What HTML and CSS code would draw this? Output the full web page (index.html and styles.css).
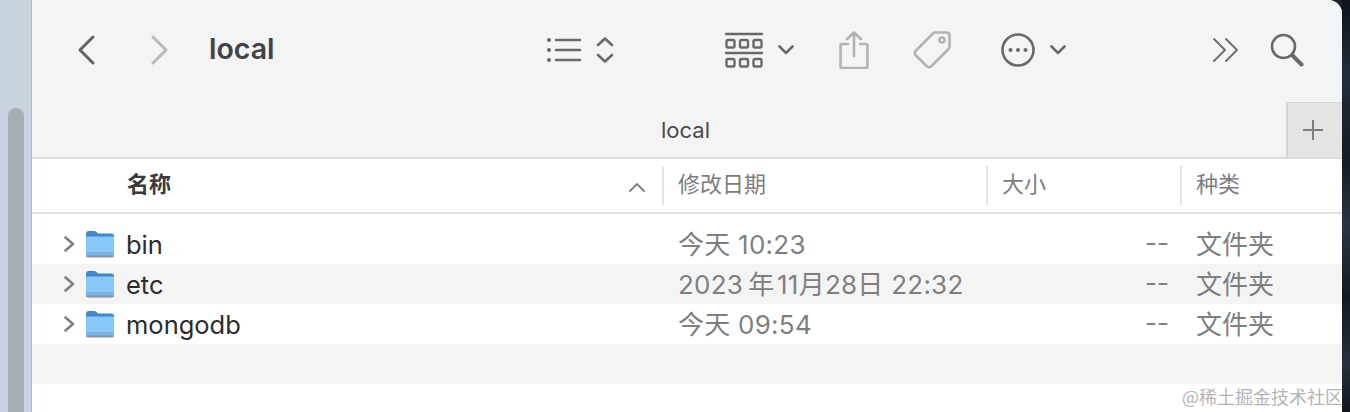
FILE: index.html
```html
<!DOCTYPE html>
<html lang="zh-CN">
<head>
    <meta charset="UTF-8">
    <meta name="viewport" content="width=device-width, initial-scale=1.0">
    <title>local</title>
    <link rel="stylesheet" href="styles.css">
</head>
<body>
    <div class="desktop">
        <!-- Window behind, only its scrollbar shows -->
        <div class="back-window">
            <div class="back-thumb"></div>
        </div>

        <div class="finder">
            <header class="toolbar">
                <div class="nav">
                    <svg class="icon" width="22" height="32" viewBox="0 0 22 32"><path d="M17 3 L4 16 L17 29" class="stroke-dark"/></svg>
                    <svg class="icon" width="22" height="32" viewBox="0 0 22 32"><path d="M5 3 L18 16 L5 29" class="stroke-light"/></svg>
                </div>
                <h1 class="title">local</h1>

                <div class="tools">
                    <div class="tool tool-list">
                        <svg class="icon" width="36" height="26" viewBox="0 0 36 26">
                            <circle cx="3" cy="3" r="2" class="fill-dark"/>
                            <circle cx="3" cy="13" r="2" class="fill-dark"/>
                            <circle cx="3" cy="23" r="2" class="fill-dark"/>
                            <path d="M10 3 H34 M10 13 H34 M10 23 H34" class="stroke-thick"/>
                        </svg>
                        <svg class="icon" width="18" height="28" viewBox="0 0 18 28">
                            <path d="M2 9 L9 2.5 L16 9 M2 19 L9 25.5 L16 19" class="stroke-thick"/>
                        </svg>
                    </div>

                    <div class="tool tool-group">
                        <svg class="icon" width="38" height="36" viewBox="0 0 38 36">
                            <path d="M1 2 H37 M1 21 H37" class="stroke-thick"/>
                            <g class="cells">
                                <rect x="1.5" y="8" width="8" height="7.5" rx="1.5"/>
                                <rect x="15" y="8" width="8" height="7.5" rx="1.5"/>
                                <rect x="28.5" y="8" width="8" height="7.5" rx="1.5"/>
                                <rect x="1.5" y="27" width="8" height="7.5" rx="1.5"/>
                                <rect x="15" y="27" width="8" height="7.5" rx="1.5"/>
                                <rect x="28.5" y="27" width="8" height="7.5" rx="1.5"/>
                            </g>
                        </svg>
                        <svg class="icon" width="16" height="10" viewBox="0 0 16 10"><path d="M1.5 1.5 L8 8 L14.5 1.5" class="stroke-thick"/></svg>
                    </div>

                    <svg class="icon tool-share" width="30" height="38" viewBox="0 0 30 38">
                        <path d="M9 13 H3 Q1.5 13 1.5 15 V35 Q1.5 37 3 37 H27 Q28.5 37 28.5 35 V15 Q28.5 13 27 13 H21" class="stroke-faded"/>
                        <path d="M15 25 V2 M8 8 L15 1.5 L22 8" class="stroke-faded"/>
                    </svg>

                    <svg class="icon tool-tag" width="40" height="40" viewBox="0 0 40 40">
                        <path d="M23 2.5 H35 Q37.5 2.5 37.5 5 V17 Q37.5 18 36.5 19 L19 36.5 Q17 38 15 36.5 L3.5 25 Q2 23 3.5 21 L21 3.5 Q22 2.5 23 2.5 Z" class="stroke-faded"/>
                        <circle cx="30" cy="10" r="2.5" class="stroke-faded"/>
                    </svg>

                    <div class="tool tool-more">
                        <svg class="icon" width="34" height="34" viewBox="0 0 34 34">
                            <circle cx="17" cy="17" r="15.5" class="stroke-thick"/>
                            <circle cx="9.5" cy="17" r="2" class="fill-dark"/>
                            <circle cx="17" cy="17" r="2" class="fill-dark"/>
                            <circle cx="24.5" cy="17" r="2" class="fill-dark"/>
                        </svg>
                        <svg class="icon" width="16" height="10" viewBox="0 0 16 10"><path d="M1.5 1.5 L8 8 L14.5 1.5" class="stroke-thick"/></svg>
                    </div>
                </div>

                <div class="tools-end">
                    <svg class="icon" width="26" height="24" viewBox="0 0 26 24"><path d="M1 1 L12 12 L1 23 M13 1 L24 12 L13 23" class="stroke-thin"/></svg>
                    <svg class="icon" width="34" height="34" viewBox="0 0 34 34">
                        <circle cx="13.5" cy="13.5" r="11.5" class="stroke-thick"/>
                        <path d="M22 22 L31.5 31.5" class="stroke-handle"/>
                    </svg>
                </div>
            </header>

            <div class="tabbar">
                <div class="tab">local</div>
                <div class="tab-add">
                    <svg class="icon" width="20" height="20" viewBox="0 0 20 20"><path d="M10 0 V20 M0 10 H20" class="stroke-plus"/></svg>
                </div>
            </div>

            <div class="columns">
                <div class="col col-name">
                    <span>名称</span>
                    <svg class="icon sort" width="16" height="9" viewBox="0 0 16 9"><path d="M1 8 L8 1 L15 8" class="stroke-sort"/></svg>
                </div>
                <div class="col col-date">修改日期</div>
                <div class="col col-size">大小</div>
                <div class="col col-kind">种类</div>
            </div>

            <div class="list">
                <div class="row">
                    <div class="cell-name">
                        <svg class="icon" width="11" height="16" viewBox="0 0 11 16"><path d="M1.5 1.5 L9 8 L1.5 14.5" class="stroke-disclosure"/></svg>
                        <svg class="icon folder" width="30" height="28" viewBox="0 0 30 28"><use href="#folder"/></svg>
                        <span>bin</span>
                    </div>
                    <div class="cell-date">今天 10:23</div>
                    <div class="cell-size">--</div>
                    <div class="cell-kind">文件夹</div>
                </div>
                <div class="row">
                    <div class="cell-name">
                        <svg class="icon" width="11" height="16" viewBox="0 0 11 16"><path d="M1.5 1.5 L9 8 L1.5 14.5" class="stroke-disclosure"/></svg>
                        <svg class="icon folder" width="30" height="28" viewBox="0 0 30 28"><use href="#folder"/></svg>
                        <span>etc</span>
                    </div>
                    <div class="cell-date">2023&thinsp;年&hairsp;11月28日 22:32</div>
                    <div class="cell-size">--</div>
                    <div class="cell-kind">文件夹</div>
                </div>
                <div class="row">
                    <div class="cell-name">
                        <svg class="icon" width="11" height="16" viewBox="0 0 11 16"><path d="M1.5 1.5 L9 8 L1.5 14.5" class="stroke-disclosure"/></svg>
                        <svg class="icon folder" width="30" height="28" viewBox="0 0 30 28"><use href="#folder"/></svg>
                        <span>mongodb</span>
                    </div>
                    <div class="cell-date">今天 09:54</div>
                    <div class="cell-size">--</div>
                    <div class="cell-kind">文件夹</div>
                </div>
                <div class="row"></div>
            </div>
        </div>

        <div class="wallpaper"></div>

        <div class="watermark">@稀土掘金技术社区</div>
    </div>

    <!-- Shared folder icon -->
    <svg class="defs" width="0" height="0">
        <defs>
            <symbol id="folder" viewBox="0 0 30 28">
                <path d="M1 4 Q1 1 3.5 1 H9.5 Q11 1 12 2.5 L13 3.5 H27 Q29 3.5 29 6 V12 H1 Z" fill="#3f87cc"/>
                <path d="M1 7.5 Q1 6.5 2 6.5 H28 Q29 6.5 29 7.5 V25 Q29 27 27 27 H3 Q1 27 1 25 Z" fill="#88c8f8"/>
                <path d="M1 22 H29 V25 Q29 27 27 27 H3 Q1 27 1 25 Z" fill="#76b5e8"/>
                <path d="M1 25.5 H29 Q29 27.5 27 27.5 H3 Q1 27.5 1 25.5 Z" fill="#8a949e"/>
            </symbol>
        </defs>
    </svg>
</body>
</html>
```

FILE: styles.css
```css
/* Reset default styles */
* {
    margin: 0;
    padding: 0;
    box-sizing: border-box;
}

body {
    font-family: Inter, "Noto Sans CJK SC", sans-serif;
    background-color: #fff;
    overflow: hidden;
}

.desktop {
    position: relative;
    display: flex;
    width: 1350px;
    height: 412px;
    overflow: hidden;
    background-color: #1b2430;
}

.defs {
    position: absolute;
}

.icon {
    display: block;
    flex: none;
    fill: none;
}

/* Icon strokes */
.stroke-dark,
.stroke-light,
.stroke-thin,
.stroke-thick,
.stroke-faded,
.stroke-handle,
.stroke-plus,
.stroke-sort,
.stroke-disclosure {
    fill: none;
    stroke-linecap: round;
    stroke-linejoin: round;
}

.stroke-dark {
    stroke: #646466;
    stroke-width: 3;
}

.stroke-light {
    stroke: #b9b9bb;
    stroke-width: 3;
}

.stroke-thin {
    stroke: #6d6d6f;
    stroke-width: 1.8;
}

.stroke-thick {
    stroke: #6a6a6c;
    stroke-width: 2.6;
}

.stroke-faded {
    stroke: #b3b3b5;
    stroke-width: 2.6;
}

.stroke-handle {
    stroke: #6a6a6c;
    stroke-width: 4;
}

.stroke-plus {
    stroke: #7f7f7f;
    stroke-width: 2;
    stroke-linecap: butt;
}

.stroke-sort {
    stroke: #808080;
    stroke-width: 1.8;
}

.stroke-disclosure {
    stroke: #808082;
    stroke-width: 2.6;
}

.fill-dark {
    fill: #6a6a6c;
}

.cells rect {
    fill: none;
    stroke: #6a6a6c;
    stroke-width: 2.4;
}

/* Left edge of the window behind */
.back-window {
    flex: none;
    width: 32px;
    padding: 108px 0 0 8px;
    background-color: #c8d3df;
    border-right: 1px solid #aeb8c4;
}

.back-thumb {
    width: 16px;
    height: 320px;
    border-radius: 8px;
    background-color: #a6adb5;
}

.finder {
    flex: none;
    width: 1310px;
    height: 412px;
    background-color: #fff;
    border-top-right-radius: 14px;
    overflow: hidden;
}

.wallpaper {
    flex: 1;
    background: linear-gradient(180deg, #0e131c 0%, #232d3c 18%, #151b26 38%, #2a3442 55%, #131924 72%, #262f3d 88%, #11161f 100%);
}

/* Toolbar */
.toolbar {
    display: flex;
    align-items: center;
    height: 102px;
    padding: 0 38px 3px 44px;
    background-color: #f3f4f6;
}

.nav {
    display: flex;
    gap: 50px;
}

.title {
    margin: 0 0 2px 39px;
    width: 337px;
    font-size: 28.5px;
    font-weight: 600;
    color: #434345;
}

.tools {
    display: flex;
    align-items: center;
}

.tool {
    display: flex;
    align-items: center;
}

.tool-list {
    gap: 14px;
    margin-right: 111px;
}

.tool-group {
    gap: 15px;
    margin-right: 45px;
}

.tool-share {
    margin-right: 43px;
}

.tool-tag {
    margin-right: 49px;
}

.tool-more {
    gap: 15px;
}

.tools-end {
    display: flex;
    align-items: center;
    gap: 31px;
    margin-left: auto;
}

/* Tab bar */
.tabbar {
    display: flex;
    height: 57px;
    background-color: #f3f4f6;
    border-bottom: 2px solid #dcdcdc;
}

.tab {
    flex: 1;
    padding: 15px 0 0 53px;
    text-align: center;
    font-size: 22px;
    color: #4a4a4c;
}

.tab-add {
    display: flex;
    align-items: center;
    justify-content: center;
    width: 56px;
    padding-right: 5px;
    background-color: #e4e4e4;
    border-left: 2px solid #d4d4d4;
    border-top: 1px solid #d8d8d8;
}

/* Column headers */
.columns {
    display: grid;
    grid-template-columns: 630px 324px 194px 1fr;
    height: 55px;
    padding: 7px 0;
    border-bottom: 2px solid #e2e2e2;
    font-size: 22px;
    color: #7d7d7f;
}

.col {
    display: flex;
    align-items: center;
    justify-content: space-between;
    padding: 0 0 7px 14px;
    border-left: 2px solid #e4e4e4;
}

.col-name {
    padding: 0 17px 7px 95px;
    border-left: 0;
    font-weight: 600;
    color: #3a3a3c;
}

.sort {
    margin-top: 11px;
}

/* File rows */
.list {
    padding-top: 10px;
}

.row {
    display: grid;
    grid-template-columns: 630px 324px 194px 1fr;
    align-items: center;
    height: 40px;
    font-size: 26px;
    color: #7f7f81;
}

.row:nth-child(even) {
    background-color: #f4f4f4;
}

.cell-name {
    display: flex;
    align-items: center;
    padding-left: 32px;
    font-size: 25.5px;
    color: #2c2c2e;
}

.folder {
    margin: 0 11px 0 10px;
}

.cell-date {
    padding: 0 0 3px 16px;
    letter-spacing: 0.25px;
}

.cell-size {
    padding: 0 11px 3px 0;
    text-align: right;
}

.cell-kind {
    padding: 0 0 3px 16px;
}

.watermark {
    position: absolute;
    right: 7px;
    bottom: 3px;
    font-family: "Noto Sans CJK SC", sans-serif;
    font-size: 18px;
    color: #b4b4b6;
    white-space: nowrap;
}
```
